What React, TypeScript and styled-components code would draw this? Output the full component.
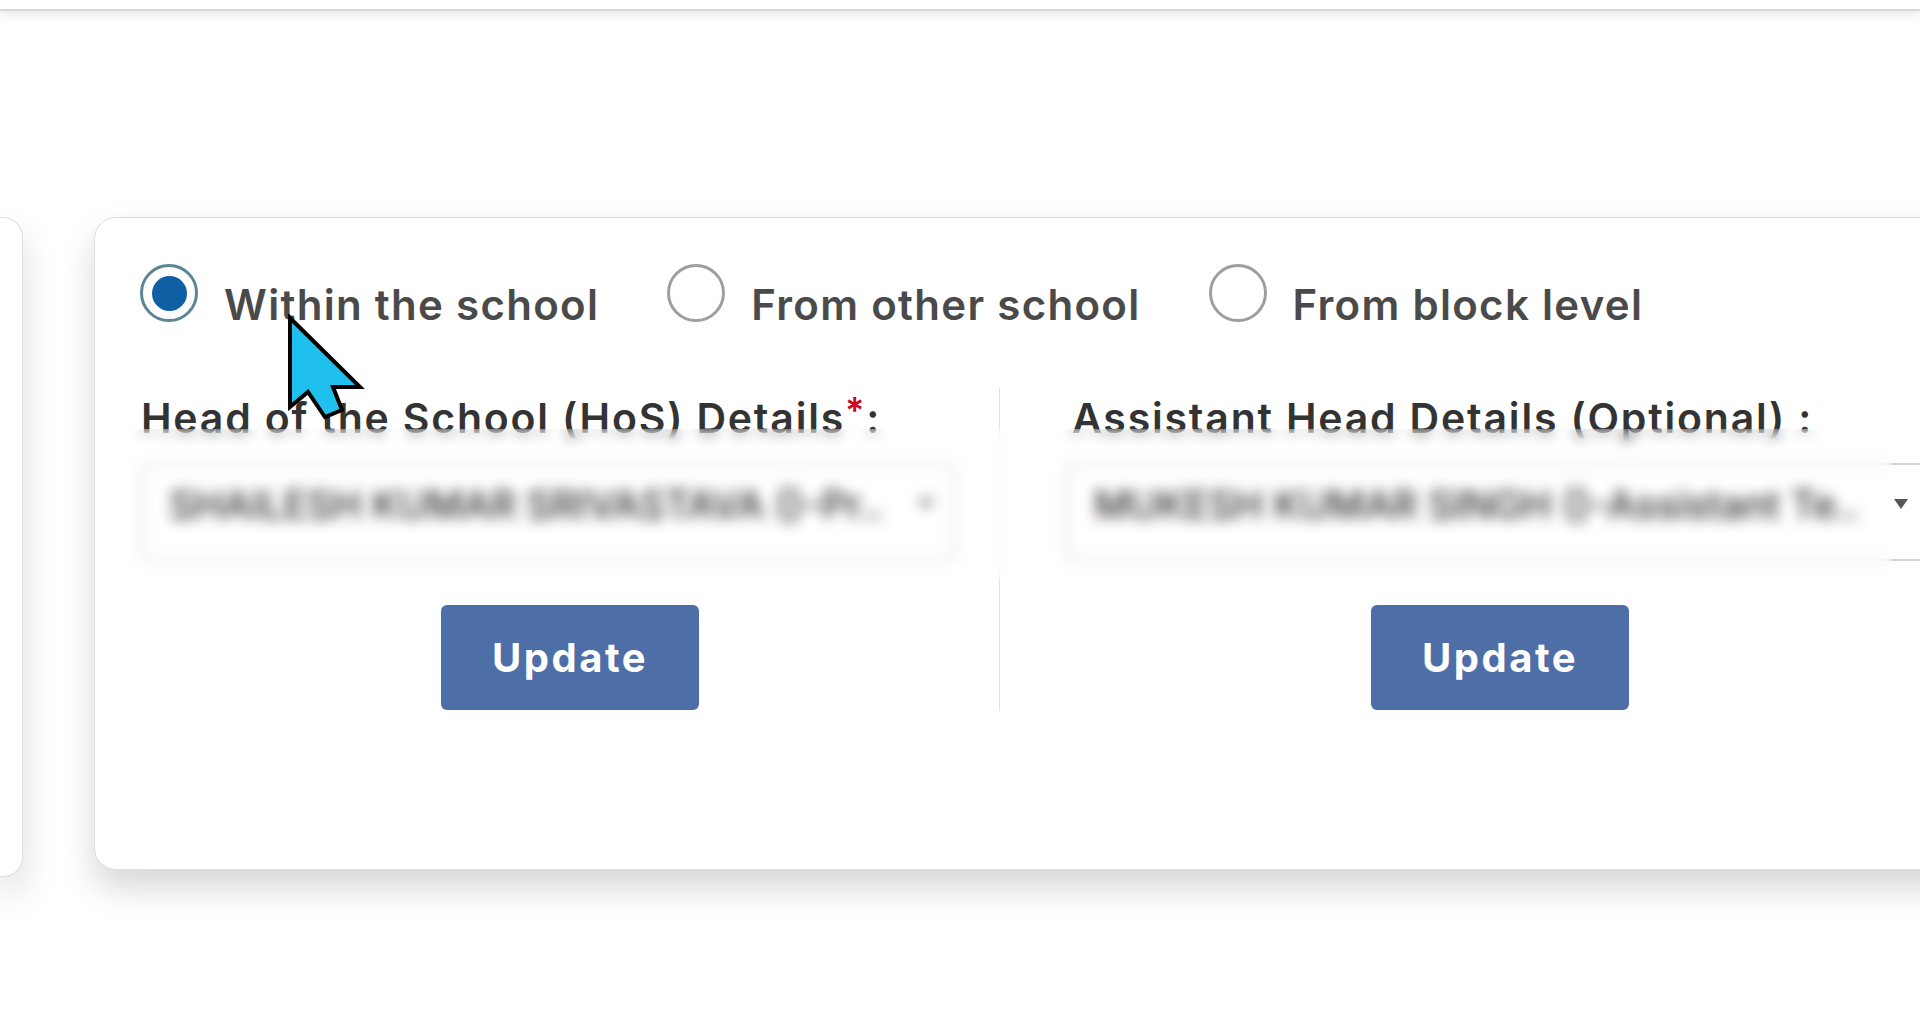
import React from 'react'
import styled, { createGlobalStyle } from 'styled-components'

const GlobalStyle = createGlobalStyle`
  html, body {
    margin: 0;
    padding: 0;
    height: 100%;
    overflow: hidden;
    background: #ffffff;
    font-family: Inter, "Liberation Sans", sans-serif;
  }
`

const Page = styled.div`
  position: relative;
  width: 1920px;
  height: 1020px;
  overflow: hidden;
  background: #fff;
`

const TopBar = styled.div`
  height: 9px;
  background: #fff;
  border-bottom: 2px solid #d8d8d8;
  box-shadow: 0 3px 12px rgba(0, 0, 0, 0.12);
`

const CardsRow = styled.div`
  display: flex;
  align-items: flex-start;
  gap: 71px;
  padding-top: 206px;
`

const SideCard = styled.div`
  flex: 0 0 23px;
  height: 660px;
  background: #fff;
  border: 1px solid #dedede;
  border-left: none;
  border-radius: 0 20px 20px 0;
  box-shadow: 0 18px 34px rgba(0, 0, 0, 0.16);
  box-sizing: border-box;
`

const MainCard = styled.div`
  flex: 0 0 2000px;
  height: 653px;
  box-sizing: border-box;
  padding: 46px 0 0 45px;
  background: #fff;
  border: 1px solid #dedede;
  border-radius: 22px;
  box-shadow: 0 18px 34px rgba(0, 0, 0, 0.16);
`

const OptionsRow = styled.div`
  display: flex;
  align-items: flex-start;
  gap: 68px;
`

const Option = styled.label`
  display: flex;
  align-items: flex-start;
  gap: 26px;
`

const Radio = styled.span<{ $selected?: boolean }>`
  flex: none;
  width: 58px;
  height: 58px;
  box-sizing: border-box;
  border-radius: 50%;
  border: 3px solid ${(p) => (p.$selected ? '#5d8593' : '#9e9e9e')};
  display: flex;
  align-items: center;
  justify-content: center;

  &::after {
    content: '';
    display: ${(p) => (p.$selected ? 'block' : 'none')};
    width: 35px;
    height: 35px;
    border-radius: 50%;
    background: #0f5fa5;
  }
`

const OptionText = styled.span`
  margin-top: 16px;
  font-size: 42px;
  line-height: 50px;
  letter-spacing: 1.3px;
  font-weight: 600;
  color: #4a4a4a;
  white-space: nowrap;
`

const Columns = styled.div`
  position: relative;
  display: flex;
  margin: 58px 0 0 1px;
`

const Column = styled.div<{ $divided?: boolean }>`
  flex: none;
  width: ${(p) => (p.$divided ? '859px' : '1000px')};
  box-sizing: border-box;
  height: 323px;
  border-right: ${(p) => (p.$divided ? '1px solid #e2e2e2' : 'none')};
  display: flex;
  flex-direction: column;
`

const FieldLabel = styled.div<{ $indent?: boolean }>`
  height: 60px;
  margin: 5px 0 0 ${(p) => (p.$indent ? '72px' : '0')};
  font-size: 41px;
  line-height: 50px;
  letter-spacing: 1.8px;
  font-weight: 600;
  color: #333;
  white-space: nowrap;
`

const Required = styled.span`
  color: #d0021b;
  font-size: 36px;
  vertical-align: 10px;
  line-height: 0;
`

const SelectField = styled.div<{ $wide?: boolean }>`
  height: 98px;
  margin: 10px 0 0 ${(p) => (p.$wide ? '66px' : '0')};
  width: ${(p) => (p.$wide ? '864px' : '814px')};
  flex: none;
  box-sizing: border-box;
  border: 2px solid #d2d2d2;
  border-radius: 8px;
  display: flex;
  align-items: center;
  padding: 0 20px 16px 26px;
  gap: 20px;
`

const SelectValue = styled.span`
  flex: 1;
  font-size: 39px;
  font-weight: 500;
  color: #333;
  white-space: nowrap;
  overflow: hidden;
`

const Arrow = styled.span`
  flex: none;
  width: 0;
  height: 0;
  border-left: 7px solid transparent;
  border-right: 7px solid transparent;
  border-top: 10px solid #555;
`

const BlurPatch = styled.div`
  position: absolute;
  top: 41px;
  left: -12px;
  width: 1763px;
  height: 150px;
  backdrop-filter: blur(7px);
`

const UpdateButton = styled.button`
  align-self: center;
  margin-top: 44px;
  width: 258px;
  height: 105px;
  border: none;
  border-radius: 6px;
  background: #4d6ea6;
  color: #fff;
  font-family: inherit;
  font-size: 40px;
  font-weight: 700;
  letter-spacing: 2.5px;
`

const Cursor = styled.svg`
  position: absolute;
  left: 284px;
  top: 312px;
  width: 84px;
  height: 112px;
`

export default function App() {
  return (
    <>
      <GlobalStyle />
      <Page>
        <TopBar />
        <CardsRow>
          <SideCard />
          <MainCard>
            <OptionsRow>
              <Option>
                <Radio $selected />
                <OptionText>Within the school</OptionText>
              </Option>
              <Option>
                <Radio />
                <OptionText>From other school</OptionText>
              </Option>
              <Option>
                <Radio />
                <OptionText>From block level</OptionText>
              </Option>
            </OptionsRow>
            <Columns>
              <Column $divided>
                <FieldLabel>
                  Head of the School (HoS) Details<Required>*</Required>:
                </FieldLabel>
                <SelectField>
                  <SelectValue>SHAILESH KUMAR SRIVASTAVA ()-Pr..</SelectValue>
                  <Arrow />
                </SelectField>
                <UpdateButton>Update</UpdateButton>
              </Column>
              <Column>
                <FieldLabel $indent>Assistant Head Details (Optional) :</FieldLabel>
                <SelectField $wide>
                  <SelectValue>MUKESH KUMAR SINGH ()-Assistant Te..</SelectValue>
                  <Arrow />
                </SelectField>
                <UpdateButton>Update</UpdateButton>
              </Column>
              <BlurPatch />
            </Columns>
          </MainCard>
        </CardsRow>
        <Cursor viewBox="0 0 84 112">
          <path
            d="M6 6 L76 75 L49 75 L58 98 L41 105 L24 80 L6 95 Z"
            fill="#1fc0ee"
            stroke="#000"
            strokeWidth="4"
            strokeLinejoin="miter"
          />
        </Cursor>
      </Page>
    </>
  )
}
